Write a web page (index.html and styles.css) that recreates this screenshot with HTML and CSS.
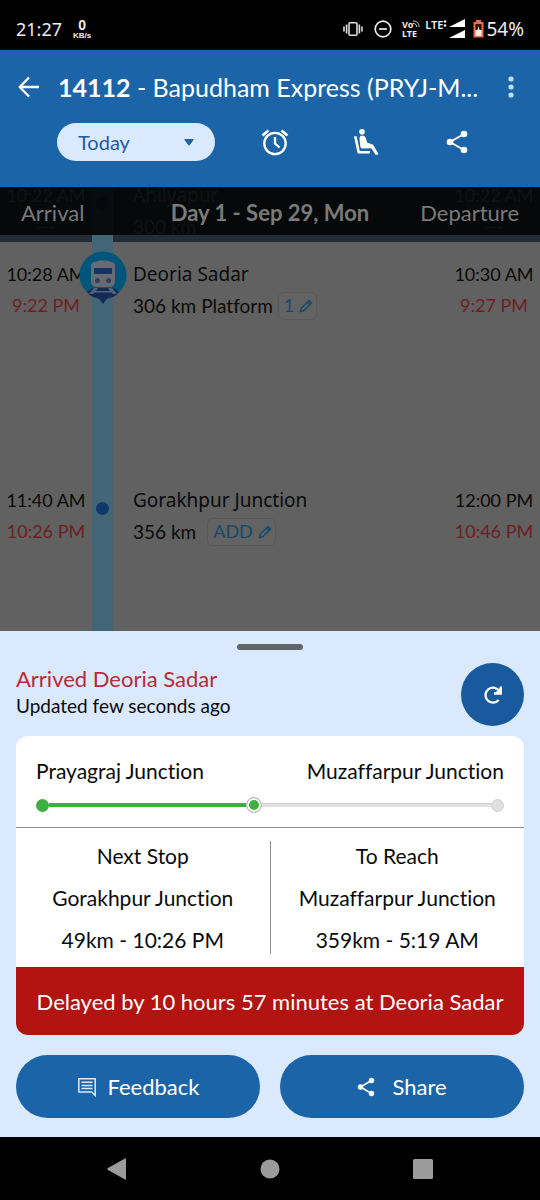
FILE: index.html
```html
<!DOCTYPE html>
<html lang="en">
<head>
<meta charset="utf-8">
<meta name="viewport" content="width=device-width, initial-scale=1">
<title>14112 - Bapudham Express</title>
<link rel="stylesheet" href="styles.css">
</head>
<body>
<div class="status">
  <span class="clock">21:27</span>
  <span class="speed"><b>0</b><small>KB/s</small></span>
  <span class="status-icons">
    <svg width="20" height="16" viewBox="0 0 20 16" fill="none" stroke="#ddd" stroke-width="1.6"><rect x="6" y="1.8" width="8" height="12.4" rx="1"/><path d="M3.6 3.5v9M1 5.500v5M16.400 3.500v9M19 5.500v5"/></svg>
    <svg class="dnd" width="18" height="18" viewBox="0 0 18 18" fill="none" stroke="#eee" stroke-width="1.700"><circle cx="9" cy="9" r="7.800"/><path d="M5 9h8"/></svg>
    <span class="volte"><span class="vo">Vo<svg width="7" height="7" viewBox="0 0 7 7" fill="none" stroke="#ddd" stroke-width="1"><path d="M0 1c4 0 6 2 6 6M0 3.500c2.500 0 3.500 1 3.500 3.500"/></svg></span><span>LTE</span></span>
    <span class="lte">LTE</span>
    <svg width="23" height="20" viewBox="0 0 23 20" fill="#fff"><circle cx="2" cy="2.500" r="1.300"/><circle cx="2" cy="6.500" r="1.300"/><path d="M22 0v8H6zM22 11v8H6z"/></svg>
    <svg class="battery" width="11" height="18" viewBox="0 0 11 18"><path d="M3 0h5v2h2.500v15.500H.5V2H3z" fill="#f26b4a"/><path d="M2.500 4h6v6h-6z" fill="#2a0d06"/><path d="M2.500 10h2l1-4 1 4h2v6h-6z" fill="#ffe9df"/></svg>
    <span class="percent">54%</span>
  </span>
</div>

<header class="header">
  <div class="title-row">
    <button class="icon-btn back" aria-label="Back"><svg width="22" height="22" viewBox="0 0 22 22" fill="none" stroke="#fff" stroke-width="2.300"><path d="M21 11H2M11 1.500L1.800 11 11 20.500"/></svg></button>
    <h1 class="title"><b>14112</b> - Bapudham Express (PRYJ-M...</h1>
    <button class="icon-btn more" aria-label="More options"><svg width="6" height="22" viewBox="0 0 6 22" fill="#bfdfff"><circle cx="3" cy="3" r="2.600"/><circle cx="3" cy="11" r="2.600"/><circle cx="3" cy="19" r="2.600"/></svg></button>
  </div>
  <div class="tools">
    <div class="day">
      <select class="day-select" aria-label="Journey day"><option>Today</option></select>
      <svg class="caret" width="10" height="7" viewBox="0 0 10 7" fill="#1b64a7"><path d="M1 0h8q1 0 .5 1L5.600 6.200q-.6.700-1.200 0L.5 1Q0 0 1 0z"/></svg>
    </div>
    <div class="actions">
      <button class="icon-btn" aria-label="Set alarm"><svg width="28" height="28" viewBox="0 0 28 28" fill="none" stroke="#fff"><circle cx="14" cy="15.500" r="10.700" stroke-width="2.300"/><path d="M14 9v6.500l4.500 4" stroke-width="2.300"/><path d="M1.500 7.500l6-5M26.500 7.500l-6-5" stroke-width="2.800"/></svg></button>
      <button class="icon-btn" aria-label="Seats"><svg width="26" height="28" viewBox="0 0 26 28" fill="#fff"><circle cx="9" cy="3.800" r="2.800"/><path d="M1 8.300h2.600L6.800 23H17v2.600H4.600z"/><path d="M6.500 10.500Q6.500 7.500 9.500 7.500 12 7.500 12.800 10l1.300 4.500 6 2.300L25.500 26l-2.600 1.200-4.600-7-9.100.3Q7.800 20.500 7.300 18.500z"/></svg></button>
      <button class="icon-btn" aria-label="Share train"><svg width="22" height="24" viewBox="0 0 22 24" fill="#fff"><path d="M18 4L4 12l14 8" fill="none" stroke="#fff" stroke-width="1.900"/><circle cx="18" cy="4" r="3.300"/><circle cx="4" cy="12" r="3.300"/><circle cx="18" cy="20" r="3.300"/></svg></button>
    </div>
  </div>
</header>

<main class="timeline">
  <section class="row passed">
    <div class="times"><span>10:22 AM</span><span>---</span></div>
    <div class="rail"><i class="dot"></i></div>
    <div class="stop"><span class="name">Ahilyapur</span><span>300 km</span></div>
    <div class="times"><span>10:22 AM</span><span>---</span></div>
    <div class="day-bar"><span>Arrival</span><b>Day 1 - Sep 29, Mon</b><span class="right">Departure</span></div>
  </section>
  <section class="row">
    <div class="times"><span>10:28 AM</span><span class="late">9:22 PM</span></div>
    <div class="rail">
      <svg class="pin" width="48" height="54" viewBox="0 0 48 54">
        <circle cx="24" cy="24" r="23.500" fill="#00567a"/>
        <path d="M8 41q3 5 10 6 3 1 6 6 3-5 6-6 7-1 10-6l-5-4H13z" fill="#152b55"/>
        <path d="M15 37h4l-2 3h14l-2-3h4l5 6h-4l-1.500-1.500h-17L14 43h-4z" fill="#51627c"/>
        <path d="M12 15q0-4 5-4.500l4-1h6l4 1q5 .5 5 4.500v15q0 6-6 6H18q-6 0-6-6z" fill="#686c72"/>
        <path d="M15 17h18v6H15z" fill="#183260"/><circle cx="18.500" cy="29.500" r="2.500" fill="#293f70"/><circle cx="29.500" cy="29.500" r="2.500" fill="#293f70"/>
      </svg>
    </div>
    <div class="stop"><span class="name">Deoria Sadar</span><span class="meta"><span>306 km</span><span>Platform</span><button class="chip">1<svg width="14" height="14" viewBox="0 0 14 14" fill="none" stroke="#17496c" stroke-width="1.500"><path d="M1.500 12.500l.8-3.200 7.800-7.800 2.400 2.400-7.800 7.800zM8.500 3l2.400 2.400"/></svg></button></span></div>
    <div class="times"><span>10:30 AM</span><span class="late">9:27 PM</span></div>
  </section>
  <section class="row">
    <div class="times"><span>11:40 AM</span><span class="late">10:26 PM</span></div>
    <div class="rail"><i class="dot"></i></div>
    <div class="stop"><span class="name">Gorakhpur Junction</span><span class="meta"><span>356 km</span><button class="chip add">ADD<svg width="14" height="14" viewBox="0 0 14 14" fill="none" stroke="#17496c" stroke-width="1.500"><path d="M1.500 12.500l.8-3.200 7.800-7.800 2.400 2.400-7.800 7.800zM8.500 3l2.400 2.400"/></svg></button></span></div>
    <div class="times"><span>12:00 PM</span><span class="late">10:46 PM</span></div>
  </section>
</main>

<section class="sheet">
  <div class="handle"></div>
  <div class="sheet-head">
    <div class="summary"><h2 class="arrived">Arrived Deoria Sadar</h2><p class="updated">Updated few seconds ago</p></div>
    <button class="refresh" aria-label="Refresh"><svg width="20" height="20" viewBox="0 0 20 20" fill="none" stroke="#fff" stroke-width="2.300"><path d="M15.700 15A7.500 7.500 0 1 1 16.500 6.500M17.800 1.500v7H11"/><path d="M13 7.500l4-4v4z" fill="#fff" stroke-width="1"/></svg></button>
  </div>
  <div class="card">
    <div class="route">
      <div class="ends"><span>Prayagraj Junction</span><span>Muzaffarpur Junction</span></div>
      <div class="track"><i class="node done"></i><i class="line done" style="width:42%"></i><i class="node current"></i><i class="line"></i><i class="node"></i></div>
    </div>
    <div class="legs">
      <div class="leg"><span>Next Stop</span><span>Gorakhpur Junction</span><span>49km - 10:26 PM</span></div>
      <div class="split"></div>
      <div class="leg"><span>To Reach</span><span>Muzaffarpur Junction</span><span>359km - 5:19 AM</span></div>
    </div>
    <div class="delay">Delayed by 10 hours 57 minutes at Deoria Sadar</div>
  </div>
  <div class="buttons">
    <button class="pill"><svg width="20" height="20" viewBox="0 0 20 20" fill="none" stroke="#dcebff" stroke-width="1.500"><path d="M18.200 18.500l-3.500-3.500H1.800V1.800h16.400zM4.500 5.200h11M4.500 8.400h11M4.500 11.600h11"/></svg>Feedback</button>
    <button class="pill share"><svg width="18" height="20" viewBox="0 0 18 20" fill="#fff"><path d="M14.500 3.500L3.500 10l11 6.500" fill="none" stroke="#fff" stroke-width="1.600"/><circle cx="14.500" cy="3.500" r="2.700"/><circle cx="3.500" cy="10" r="2.700"/><circle cx="14.500" cy="16.500" r="2.700"/></svg>Share</button>
  </div>
</section>

<nav class="sysnav" aria-label="System navigation">
  <button class="icon-btn" aria-label="System back"><svg width="20" height="22" viewBox="0 0 20 22" fill="#9b9b9b"><path d="M1 10L18 .5q1-.5 1 .7v19.600q0 1.200-1 .7L1 12q-1.500-1 0-2z"/></svg></button>
  <button class="icon-btn" aria-label="Home"><svg width="20" height="20" viewBox="0 0 20 20" fill="#9b9b9b"><circle cx="10" cy="10" r="9.500"/></svg></button>
  <button class="icon-btn" aria-label="Recent apps"><svg width="20" height="20" viewBox="0 0 20 20" fill="#9b9b9b"><rect width="20" height="20" rx="1.500"/></svg></button>
</nav>
</body>
</html>
```

FILE: styles.css
```css
* { box-sizing: border-box; }
body {
  margin: 0;
  min-height: 100vh;
  display: flex;
  flex-direction: column;
  background: #000;
  font-family: Lato, "Noto Sans", sans-serif;
  font-size: 20px;
  font-variant-ligatures: none;
  color: #0a0a0a;
}
h1, h2, p { margin: 0; font-weight: 400; }
svg { display: block; flex: none; }
button, select { font: inherit; border: 0; margin: 0; padding: 0; }
.icon-btn { background: none; display: flex; align-items: center; justify-content: center; }

.status {
  height: 50px;
  padding: 8px 16px 0;
  display: flex;
  align-items: center;
  color: #eee;
  font-family: "Noto Sans", sans-serif;
}
.clock { font-size: 18px; }
.speed {
  display: flex;
  flex-direction: column;
  align-items: center;
  margin-left: 11px;
  font-family: "Liberation Sans", sans-serif;
}
.speed b { font-size: 14px; line-height: 12px; }
.speed small { font-size: 8px; line-height: 9px; font-weight: 700; }
.status-icons { margin-left: auto; display: flex; align-items: center; }
.dnd { margin-left: 11px; }
.volte {
  margin: 0 5px 0 10px;
  display: flex;
  flex-direction: column;
  font-size: 9px;
  line-height: 9px;
  font-weight: 700;
}
.vo { display: flex; }
.lte { font-size: 11px; line-height: 11px; font-weight: 600; align-self: flex-start; }
.battery { margin: 0 2px 0 7px; }
.percent { font-size: 19px; line-height: 20px; }

.header { background: #1b64a7; color: #fff; padding-bottom: 26px; }
.title-row { height: 73px; display: flex; align-items: center; padding: 0 26px 0 18px; }
.title { flex: 1; margin-left: 18px; font-size: 25px; white-space: nowrap; overflow: hidden; }
.tools { display: flex; padding: 0 38px 0 57px; gap: 15px; }
.day { position: relative; width: 158px; }
.day-select {
  appearance: none;
  width: 100%;
  height: 38px;
  padding: 0 21px;
  border-radius: 19px;
  background: #dbe9ff;
  color: #1b5c9c;
  font-size: 20px;
}
.caret { position: absolute; right: 21px; top: 16px; pointer-events: none; }
.actions { flex: 1; display: flex; }
.actions .icon-btn { flex: 1; }

.timeline { flex: 1; background: #616161; font-size: 19px; line-height: 31px; display: flex; flex-direction: column; }
.row { display: grid; grid-template-columns: 92px 21px 1fr 92px; min-height: 226px; }
.row:last-child { flex: 1; min-height: 163px; }
.times, .stop { display: flex; flex-direction: column; padding-top: 17px; white-space: nowrap; }
.times { align-items: center; font-size: 18px; }
.stop { padding-left: 20px; }
.name { font-family: "Noto Sans", sans-serif; }
.late { color: #6c1f23; }
.rail { position: relative; display: flex; justify-content: center; align-items: flex-start; background: #436677; }
.dot { width: 13px; height: 13px; margin-top: 34px; border-radius: 50%; background: #11386a; }
.pin { position: absolute; top: 9px; left: 50%; margin-left: -24px; }
.meta { display: flex; align-items: center; gap: 5px; }
.chip {
  display: flex;
  align-items: center;
  gap: 5px;
  height: 28px;
  padding: 0 3px 0 5px;
  border: 1px solid #555a5f;
  border-radius: 6px;
  background: #636363;
  color: #17496c;
  font-size: 18px;
}
.add { margin-left: 6px; }
.passed { position: relative; min-height: 55px; height: 55px; background: #222c34; overflow: hidden; }
.passed .times, .passed .stop { padding-top: 0; margin-top: -7px; color: #aaa; }
.passed .dot { margin-top: 10px; }
.day-bar {
  position: absolute;
  inset: 0 0 7px;
  display: grid;
  grid-template-columns: 1fr auto 1fr;
  align-items: center;
  padding: 2px 21px 0;
  background: rgba(4, 5, 6, .93);
  color: #7a7a7a;
  font-size: 22px;
}
.right { text-align: right; }

.sheet { background: #dbe9ff; padding: 13px 16px 19px; }
.handle { width: 66px; height: 6px; margin: 0 auto 13px; border-radius: 3px; background: #5f6469; }
.sheet-head { display: flex; align-items: center; justify-content: space-between; margin-bottom: 10px; }
.summary { padding-bottom: 6px; }
.arrived { font-size: 22px; line-height: 28px; color: #b52c36; }
.updated { font-size: 19px; line-height: 26px; }
.refresh {
  width: 63px;
  height: 63px;
  border-radius: 50%;
  background: #185a9d;
  display: flex;
  align-items: center;
  justify-content: center;
}
.card { background: #fff; border-radius: 12px; overflow: hidden; font-size: 21px; }
.route { padding: 19px 20px 14px; border-bottom: 1px solid #8e9090; }
.ends { display: flex; justify-content: space-between; line-height: 32px; }
.track { display: flex; align-items: center; height: 16px; margin-top: 10px; }
.node { flex: none; width: 13px; height: 13px; border-radius: 50%; background: #e0e0e0; border: 1px solid #cfcfcf; }
.line { flex: 1 1 auto; height: 4px; background: #e2e2e2; border-top: 1px solid #cfcfcf; }
.line.done { flex: none; background: #3fae45; border: 0; }
.node.done { background: #3fae45; border: 0; }
.node.current { width: 16px; height: 16px; background: #3fae45; border: 1px solid #bbb; box-shadow: inset 0 0 0 2px #fff; }
.legs { display: flex; }
.leg { flex: 1; padding: 7px 0 6px; display: flex; flex-direction: column; align-items: center; line-height: 42px; }
.split { width: 1px; margin: 13px 0; background: #909090; }
.delay { background: #b31311; color: #fff; text-align: center; font-size: 22px; line-height: 28px; padding: 21px 12px 19px; }
.buttons { display: grid; grid-template-columns: 1fr 1fr; gap: 20px; margin-top: 20px; }
.pill {
  height: 63px;
  border-radius: 32px;
  background: #1b64a7;
  color: #fff;
  font-size: 22px;
  display: flex;
  align-items: center;
  justify-content: center;
  gap: 11px;
}
.share { gap: 17px; }
.sysnav { height: 63px; display: grid; grid-template-columns: 1fr 1fr 1fr; padding: 0 40px; }
```
